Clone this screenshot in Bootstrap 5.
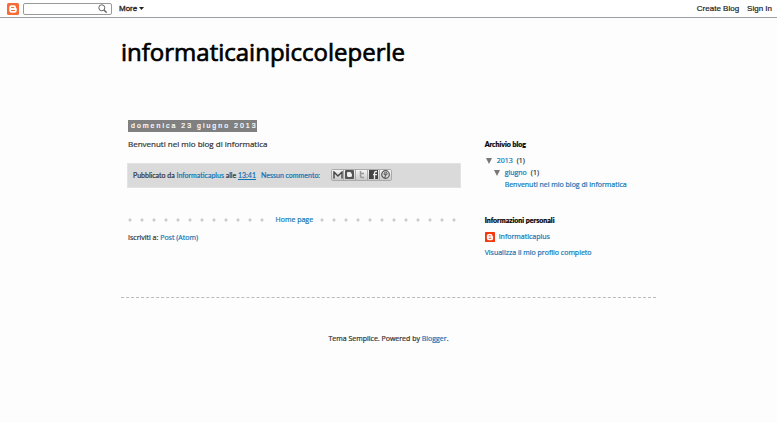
<!DOCTYPE html>
<html lang="it">
<head>
<meta charset="utf-8">
<meta name="viewport" content="width=device-width, initial-scale=1">
<title>informaticainpiccoleperle</title>
<link href="https://cdn.jsdelivr.net/npm/bootstrap@5.3.0/dist/css/bootstrap.min.css" rel="stylesheet">
<style>
body{font-family:"Trebuchet MS","Open Sans",sans-serif;font-size:7px;line-height:12px;color:#333;background:#fdfdfd;-webkit-text-stroke:.2px}
a{color:#1176b5;text-decoration:none}
.blog-bar{height:18px;background:#fff;border-bottom:1px solid #999fa2;font-family:"Liberation Sans",sans-serif;padding:0 5px 0 7px}
.blog-bar a,.more-btn{color:#222;font-size:8px;line-height:12px}
.search-box{width:89px;height:12px;border:1px solid #999;border-radius:2px;background:#fff}
.search-box input{font-size:8px;min-width:0}
.more-btn{background:none;border:0;padding:0;margin-left:7px;gap:2px;-webkit-text-stroke:.3px}
.page-wrap{max-width:535px}
.blog-title{font-size:24px;line-height:32px;font-weight:400;color:#000;margin:18px 0 52px;-webkit-text-stroke:.7px}
.main-col{padding:0 17px 0 7px}
.side-col{padding:18px 0 0 7px}
.date-tag{background:#808080;color:#fff;font-family:"Liberation Sans",sans-serif;font-size:7px;font-weight:400;line-height:12px;letter-spacing:2px;padding:0 0 0 3px;margin:0;width:129px;white-space:nowrap}
.post-title{font-size:8px;margin:6px 0 0}
.post-foot{background:#dadada;border:1px solid #e3e3e3;margin:13px 0 0 -1px;height:25px;padding:0 0 2px 5px;font-family:"Trebuchet MS","Lato",sans-serif;white-space:nowrap}
.reply-link{margin-left:5px}
.share-set{border:1px solid #aaa;border-radius:2px;margin-left:11px}
.share-set button{width:11px;height:10px;padding:0;border:0;border-right:1px solid #aaa;background:linear-gradient(#f4f4f4,#c9c9c9);display:flex;align-items:center;justify-content:center;box-sizing:content-box}
.share-set button:last-child{border-right:0}
.pager{margin-top:26px}
.pager a{padding:0 7px}
.feed-line{margin:6px 0 0}
.dots{height:4px;background:radial-gradient(circle at 2px 2px,#cbcbcb 1px,transparent 2px) 0 0/12px 4px repeat-x}
.side-title{font-family:"Trebuchet MS","Lato",sans-serif;font-size:7px;font-weight:900;line-height:13px;color:#000;margin:0}
.archive-tree{line-height:12px;margin-top:4px}
.profile-block{margin-top:23px}
.tri{width:0;height:0;border:3px solid transparent;border-top:6px solid #777;border-bottom:0;padding:0;background:none;margin:0 5px 0 1px}
.rule-line{border-top:1px dashed #bbb;margin-top:38px}
.page-foot{padding-top:35px}
</style>
<script src="https://cdn.jsdelivr.net/npm/bootstrap@5.3.0/dist/js/bootstrap.bundle.min.js"></script>
</head>
<body>
<nav class="blog-bar d-flex align-items-center">
<a href="#" aria-label="Blogger" class="d-flex me-1"><svg width="12" height="12" viewBox="0 0 16 16"><rect width="16" height="16" rx="2" fill="#f96b36"/><path d="M6 3h3q3 0 3 3v1h1v3q0 3-3 3H6q-3 0-3-3V6q0-3 3-3z" fill="#fff"/><path d="M6 6h3M6 10h4" stroke="#f96b36" stroke-width="1.5" stroke-linecap="round"/></svg></a>
<form class="search-box d-flex align-items-center"><input class="border-0 p-0 flex-fill bg-transparent" type="text" aria-label="Cerca"><button type="submit" class="border-0 bg-transparent p-0 pe-1 d-flex" aria-label="Cerca"><svg width="9" height="9" viewBox="0 0 9 9" fill="none" stroke="#666"><circle cx="3.8" cy="3.8" r="3"/><path d="M6 6l2.6 2.6" stroke-width="1.5"/></svg></button></form>
<button type="button" class="more-btn d-flex align-items-center">More<svg width="5" height="3"><path d="M0 0h5L2.500 3z" fill="#222"/></svg></button>
<a href="#" class="ms-auto">Create Blog</a><a href="#" class="ms-2">Sign In</a>
</nav>
<div class="page-wrap mx-auto">
<h1 class="blog-title">informaticainpiccoleperle</h1>
<div class="row g-0">
<main class="col-8"><div class="main-col">
<h2 class="date-tag">domenica 23 giugno 2013</h2>
<p class="post-title">Benvenuti nel mio blog di informatica</p>
<div class="post-foot d-flex align-items-center">
<span>Pubblicato da <a href="#">Informaticaplus</a> alle <a href="#" class="text-decoration-underline">13:41</a></span>
<a href="#" class="reply-link">Nessun commento:</a>
<div class="share-set d-flex">
<button type="button" aria-label="Email"><svg width="10" height="8" viewBox="0 0 10 8"><path d="M1 7.500V1l4 4 4-4v6.500" fill="none" stroke="#444" stroke-width="1.400"/></svg></button>
<button type="button" aria-label="Blog"><svg width="9" height="9" viewBox="0 0 9 9"><rect width="9" height="9" rx="1" fill="#555"/><path d="M3 2h2q1.500 0 1.500 2H7v1.500Q7 7 5.500 7H3.500Q2 7 2 5.500V3q0-1 1-1z" fill="#eee"/></svg></button>
<button type="button" aria-label="Twitter"><svg width="8" height="9" viewBox="0 0 8 9"><path d="M2.500 1v5q0 1.500 1.500 1.500h2M2.500 3.500H6" fill="none" stroke="#999" stroke-width="1.500"/></svg></button>
<button type="button" aria-label="Facebook"><svg width="9" height="9" viewBox="0 0 9 9"><rect width="9" height="9" fill="#444"/><path d="M8 1.500H7q-1.500 0-1.500 1.500v6M4 4.700h4" fill="none" stroke="#eee" stroke-width="1.300"/></svg></button>
<button type="button" aria-label="Pinterest"><svg width="9" height="9" viewBox="0 0 9 9" fill="none" stroke="#555"><circle cx="4.500" cy="4.500" r="3.800" stroke-width="1.200"/><path d="M3.300 5q-1-2.500 1.200-2.700 2 0 1.600 1.800-.6 1.500-1.600.8M4.700 3.500L3.800 8"/></svg></button>
</div>
</div>
<div class="pager d-flex align-items-center"><div class="dots flex-fill"></div><a href="#">Home page</a><div class="dots flex-fill"></div></div>
<p class="feed-line">Iscriviti a: <a href="#">Post (Atom)</a></p>
</div></main>
<aside class="col-4"><div class="side-col">
<h2 class="side-title">Archivio blog</h2>
<div class="archive-tree">
<div class="d-flex align-items-center"><button type="button" class="tri" aria-label="2013"></button><a href="#" class="me-1">2013</a>(1)</div>
<div class="d-flex align-items-center ms-2"><button type="button" class="tri" aria-label="giugno"></button><a href="#" class="me-1">giugno</a>(1)</div>
<div class="ms-3 ps-1"><a href="#">Benvenuti nel mio blog di informatica</a></div>
</div>
<h2 class="side-title profile-block">Informazioni personali</h2>
<div class="d-flex align-items-center my-1"><svg width="10" height="10" viewBox="0 0 16 16"><rect width="16" height="16" rx="1" fill="#f4390e"/><path d="M6 3h3q3 0 3 3v1h1v3q0 3-3 3H6q-3 0-3-3V6q0-3 3-3z" fill="#fff"/><path d="M6 6h3M6 10h4" stroke="#f4390e" stroke-width="1.500"/></svg><a href="#" class="ms-1">Informaticaplus</a></div>
<a href="#">Visualizza il mio profilo completo</a>
</div></aside>
</div>
<div class="rule-line"></div>
<footer class="page-foot text-center">Tema Semplice. Powered by <a href="#">Blogger</a>.</footer>
</div>
</body>
</html>
